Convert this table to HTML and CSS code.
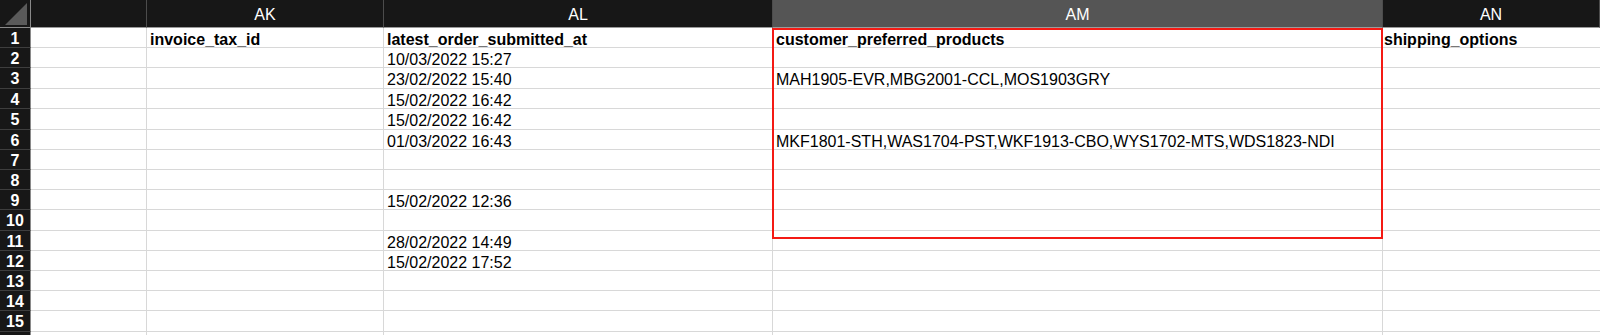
FILE: index.html
```html
<!DOCTYPE html>
<html>
<head>
<meta charset="utf-8">
<link rel="stylesheet" href="styles.css">
</head>
<body>
<div class="sheet">
  <div class="row hdr">
    <div class="corner"><svg width="30" height="27" viewBox="0 0 30 27"><polygon points="5,25 27,3 27,25" fill="#5a5a5a"/></svg></div>
    <div class="ch"></div>
    <div class="ch">AK</div>
    <div class="ch">AL</div>
    <div class="ch sel">AM</div>
    <div class="ch">AN</div>
  </div>
  <div class="row"><div class="rh">1</div><div class="c"></div><div class="c b">invoice_tax_id</div><div class="c b">latest_order_submitted_at</div><div class="c b">customer_preferred_products</div><div class="c b last">shipping_options</div></div>
  <div class="row"><div class="rh">2</div><div class="c"></div><div class="c"></div><div class="c">10/03/2022 15:27</div><div class="c"></div><div class="c last"></div></div>
  <div class="row tall"><div class="rh">3</div><div class="c"></div><div class="c"></div><div class="c">23/02/2022 15:40</div><div class="c">MAH1905-EVR,MBG2001-CCL,MOS1903GRY</div><div class="c last"></div></div>
  <div class="row"><div class="rh">4</div><div class="c"></div><div class="c"></div><div class="c">15/02/2022 16:42</div><div class="c"></div><div class="c last"></div></div>
  <div class="row tall"><div class="rh">5</div><div class="c"></div><div class="c"></div><div class="c">15/02/2022 16:42</div><div class="c"></div><div class="c last"></div></div>
  <div class="row"><div class="rh">6</div><div class="c"></div><div class="c"></div><div class="c">01/03/2022 16:43</div><div class="c">MKF1801-STH,WAS1704-PST,WKF1913-CBO,WYS1702-MTS,WDS1823-NDI</div><div class="c last"></div></div>
  <div class="row"><div class="rh">7</div><div class="c"></div><div class="c"></div><div class="c"></div><div class="c"></div><div class="c last"></div></div>
  <div class="row"><div class="rh">8</div><div class="c"></div><div class="c"></div><div class="c"></div><div class="c"></div><div class="c last"></div></div>
  <div class="row"><div class="rh">9</div><div class="c"></div><div class="c"></div><div class="c">15/02/2022 12:36</div><div class="c"></div><div class="c last"></div></div>
  <div class="row tall"><div class="rh">10</div><div class="c"></div><div class="c"></div><div class="c"></div><div class="c"></div><div class="c last"></div></div>
  <div class="row"><div class="rh">11</div><div class="c"></div><div class="c"></div><div class="c">28/02/2022 14:49</div><div class="c"></div><div class="c last"></div></div>
  <div class="row"><div class="rh">12</div><div class="c"></div><div class="c"></div><div class="c">15/02/2022 17:52</div><div class="c"></div><div class="c last"></div></div>
  <div class="row"><div class="rh">13</div><div class="c"></div><div class="c"></div><div class="c"></div><div class="c"></div><div class="c last"></div></div>
  <div class="row"><div class="rh">14</div><div class="c"></div><div class="c"></div><div class="c"></div><div class="c"></div><div class="c last"></div></div>
  <div class="row tall"><div class="rh">15</div><div class="c"></div><div class="c"></div><div class="c"></div><div class="c"></div><div class="c last"></div></div>
  <div class="row"><div class="rh"></div><div class="c"></div><div class="c"></div><div class="c"></div><div class="c"></div><div class="c last"></div></div>
  <div class="sel-box"></div>
</div>
</body>
</html>
```

FILE: styles.css
```css
html, body {
  margin: 0;
  padding: 0;
  background: #ffffff;
  overflow: hidden;
}

.sheet {
  position: relative;
  width: 1600px;
  height: 335px;
  overflow: hidden;
  font-family: "Liberation Sans", Arial, sans-serif;
  font-size: 16px;
  color: #000000;
}

.row {
  display: grid;
  grid-template-columns: 31px 116px 237px 389px 610px 1fr;
  grid-template-rows: minmax(0, 1fr);
  height: 20px;
}

.row.tall {
  height: 21px;
}

.row.hdr {
  height: 28px;
  background: #171717;
}

.corner {
  background: #171717;
  border-right: 1px solid #8a8a8a;
  border-bottom: 1px solid #8a8a8a;
  box-sizing: border-box;
  display: flex;
}

.corner svg {
  display: block;
}

.ch {
  box-sizing: border-box;
  background: #171717;
  border-right: 1px solid #4c4c4c;
  border-bottom: 1px solid #9a9a9a;
  color: #ffffff;
  text-align: center;
  line-height: 29px;
  font-size: 16px;
  overflow: hidden;
}

.ch.sel {
  background: #555555;
}

.rh {
  box-sizing: border-box;
  background: #171717;
  border-right: 1px solid #8a8a8a;
  border-bottom: 1px solid #3e3e3e;
  color: #ffffff;
  font-weight: bold;
  text-align: center;
  line-height: 21px;
  font-size: 16px;
  overflow: hidden;
}

.tall .rh {
  line-height: 22px;
}

.c {
  box-sizing: border-box;
  border-right: 1px solid #d8d8d8;
  border-bottom: 1px solid #d8d8d8;
  padding-left: 3px;
  line-height: 23px;
  white-space: nowrap;
  min-width: 0;
}

.tall .c {
  line-height: 24px;
}

.c.last {
  padding-left: 1px;
  border-right: none;
}

.b {
  font-weight: bold;
}

.sel-box {
  position: absolute;
  left: 772px;
  top: 28px;
  width: 611px;
  height: 211px;
  border: 2px solid #f41a14;
  box-sizing: border-box;
  pointer-events: none;
}
```
